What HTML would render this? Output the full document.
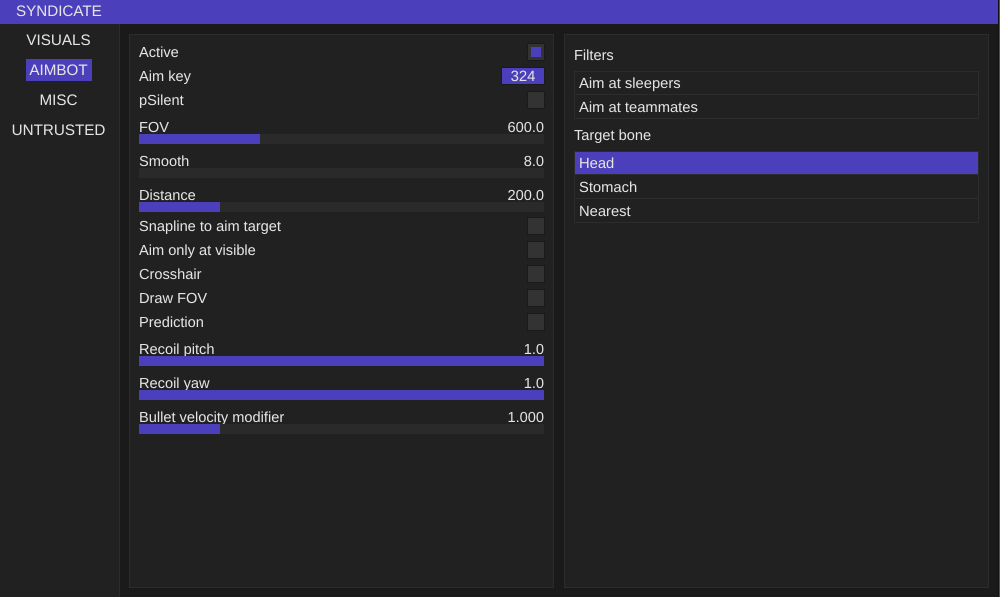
<!DOCTYPE html>
<html><head><meta charset="utf-8"><style>
html,body{margin:0;padding:0;width:1000px;height:597px;overflow:hidden;background:#1a1a1a}
body{position:relative;font:14.6px/16px "Liberation Sans",sans-serif;color:#e4e4e4;text-rendering:geometricPrecision}
div{position:absolute;box-sizing:border-box;white-space:nowrap}
.t{height:16px;margin-top:-0.5px}
.r{text-align:right;right:456px}
.n{font-size:15.2px;width:117px;text-align:center;margin-top:0}
.l{font-size:14.75px}
.p{background:#212121;border:1px solid #2c2c2c;top:34px;height:554px;width:425px}
.c{left:527px;width:18px;height:18px;background:#333;border:1px solid #1a1a1a}
.tr{left:139px;width:405px;height:10px;background:#2a2a2a}
.f{left:139px;height:10px;background:#4c3fbb}
.b{left:574px;width:405px;border:1px solid #2c2c2c}
</style></head><body>
<div style="left:0;top:0;width:998px;height:24px;background:#4c3fbb"></div>
<div style="left:998px;top:0;width:1px;height:597px;background:#111"></div>
<div style="left:999px;top:0;width:1px;height:597px;background:#4c3fbb"></div>
<div class="t" style="left:16px;top:4px;font-size:15.2px;margin-top:0">SYNDICATE</div>
<div style="left:0;top:24px;width:120px;height:573px;background:#212121;border-right:1px solid #2c2c2c"></div>
<div style="left:26px;top:59px;width:66px;height:22px;background:#4c3fbb"></div>
<div class="t n" style="left:0;top:33px">VISUALS</div>
<div class="t n" style="left:0;top:63px">AIMBOT</div>
<div class="t n" style="left:0;top:93px">MISC</div>
<div class="t n" style="left:0;top:123px">UNTRUSTED</div>

<div class="p" style="left:129px"></div>
<div class="p" style="left:564px"></div>

<div class="t" style="left:139px;top:45px">Active</div>
<div class="c" style="top:43px"></div>
<div style="left:531px;top:47px;width:10px;height:10px;background:#4c3fbb"></div>
<div class="t" style="left:139px;top:69px">Aim key</div>
<div style="left:501px;top:67px;width:44px;height:18px;background:#4c3fbb;border:1px solid #1a1a1a;text-align:center;line-height:18px;font-size:14.9px">324</div>
<div class="t" style="left:139px;top:93px">pSilent</div>
<div class="c" style="top:91px"></div>

<div class="t" style="left:139px;top:120px">FOV</div>
<div class="t r" style="top:120px">600.0</div>
<div class="tr" style="top:134px"></div><div class="f" style="top:134px;width:121px"></div>

<div class="t" style="left:139px;top:154px">Smooth</div>
<div class="t r" style="top:154px">8.0</div>
<div class="tr" style="top:168px"></div>

<div class="t" style="left:139px;top:188px">Distance</div>
<div class="t r" style="top:188px">200.0</div>
<div class="tr" style="top:202px"></div><div class="f" style="top:202px;width:81px"></div>

<div class="t" style="left:139px;top:219px">Snapline to aim target</div>
<div class="c" style="top:217px"></div>
<div class="t" style="left:139px;top:243px">Aim only at visible</div>
<div class="c" style="top:241px"></div>
<div class="t" style="left:139px;top:267px">Crosshair</div>
<div class="c" style="top:265px"></div>
<div class="t" style="left:139px;top:291px">Draw FOV</div>
<div class="c" style="top:289px"></div>
<div class="t" style="left:139px;top:315px">Prediction</div>
<div class="c" style="top:313px"></div>

<div class="t" style="left:139px;top:342px">Recoil pitch</div>
<div class="t r" style="top:342px">1.0</div>
<div class="f" style="top:356px;width:405px"></div>

<div class="t" style="left:139px;top:376px">Recoil yaw</div>
<div class="t r" style="top:376px">1.0</div>
<div class="f" style="top:390px;width:405px"></div>

<div class="t" style="left:139px;top:410px">Bullet velocity modifier</div>
<div class="t r" style="top:410px">1.000</div>
<div class="tr" style="top:424px"></div><div class="f" style="top:424px;width:81px"></div>

<div class="t" style="left:574px;top:48px">Filters</div>
<div class="b" style="top:71px;height:24px"></div>
<div class="b" style="top:94px;height:25px"></div>
<div class="t l" style="left:579px;top:76px">Aim at sleepers</div>
<div class="t l" style="left:579px;top:100px">Aim at teammates</div>

<div class="t" style="left:574px;top:128px">Target bone</div>
<div class="b" style="top:151px;height:24px;background:#4c3fbb"></div>
<div class="b" style="top:174px;height:25px"></div>
<div class="b" style="top:198px;height:25px"></div>
<div class="t l" style="left:579px;top:156px">Head</div>
<div class="t l" style="left:579px;top:180px">Stomach</div>
<div class="t l" style="left:579px;top:204px">Nearest</div>
</body></html>
